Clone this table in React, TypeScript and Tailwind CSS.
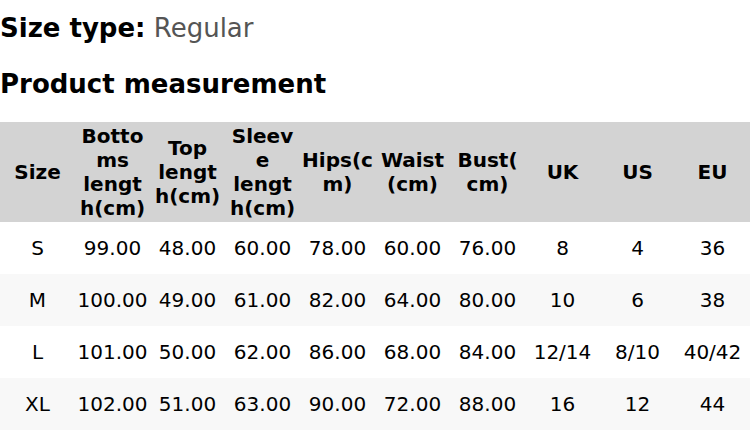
const columns = [
  'Size',
  'Bottoms length(cm)',
  'Top length(cm)',
  'Sleeve length(cm)',
  'Hips(cm)',
  'Waist (cm)',
  'Bust(cm)',
  'UK',
  'US',
  'EU',
];

const rows = [
  ['S', '99.00', '48.00', '60.00', '78.00', '60.00', '76.00', '8', '4', '36'],
  ['M', '100.00', '49.00', '61.00', '82.00', '64.00', '80.00', '10', '6', '38'],
  ['L', '101.00', '50.00', '62.00', '86.00', '68.00', '84.00', '12/14', '8/10', '40/42'],
  ['XL', '102.00', '51.00', '63.00', '90.00', '72.00', '88.00', '16', '12', '44'],
];

export default function App() {
  return (
    <div className="w-[750px] h-[430px] overflow-hidden bg-white text-black font-['DejaVu_Sans',sans-serif]">
      {/* Size type */}
      <div className="pt-[13px] text-[26px] leading-[30px]">
        <span className="font-bold">Size type:</span>{' '}
        <span className="text-[#555555]">Regular</span>
      </div>

      {/* Heading */}
      <h2 className="mt-[26px] text-[26px] leading-[30px] font-bold">Product measurement</h2>

      {/* Measurement table */}
      <table className="mt-[23px] w-full table-fixed border-collapse text-[20px] leading-[24px]">
        <thead>
          <tr className="bg-[#d3d3d3]">
            {columns.map((col) => (
              <th key={col} className="px-[2px] py-[2px] text-center font-bold break-words">
                {col}
              </th>
            ))}
          </tr>
        </thead>
        <tbody>
          {rows.map((row, i) => (
            <tr key={row[0]} className={i % 2 === 1 ? 'bg-[#f8f8f8]' : 'bg-white'}>
              {row.map((cell, j) => (
                <td key={j} className="px-[2px] py-[14px] text-center whitespace-nowrap">
                  {cell}
                </td>
              ))}
            </tr>
          ))}
        </tbody>
      </table>
    </div>
  );
}
